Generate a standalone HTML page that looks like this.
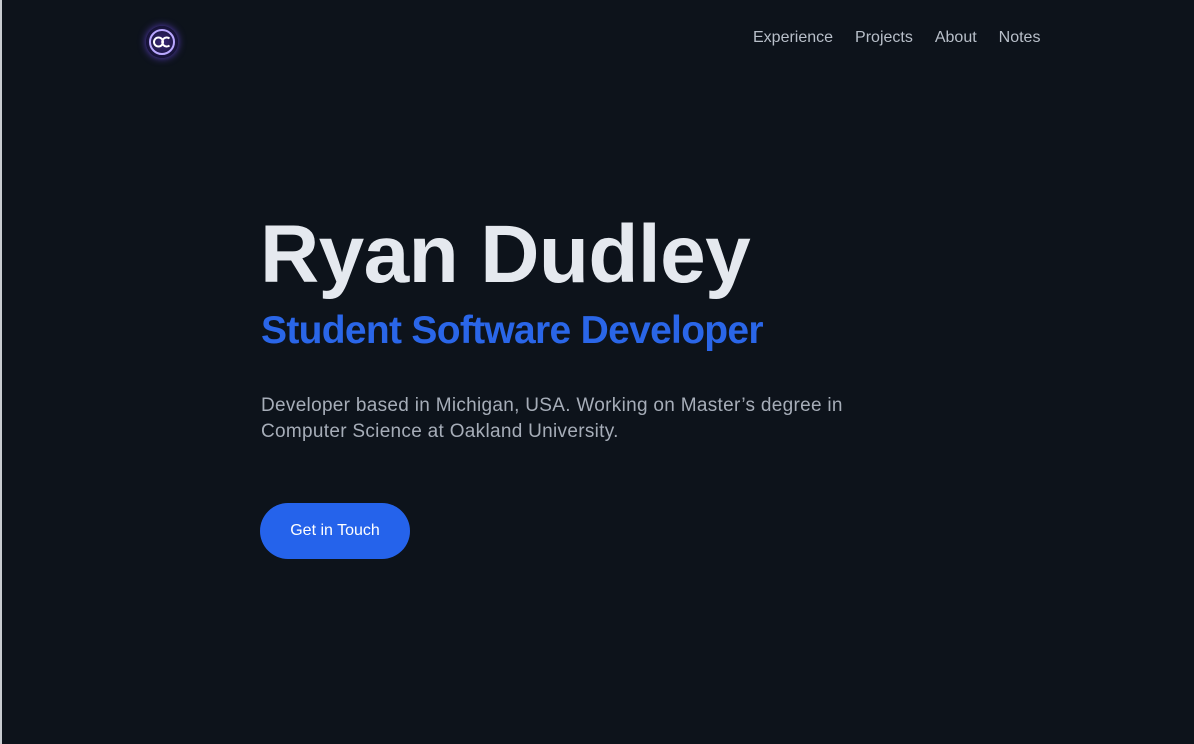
<!DOCTYPE html>
<html><head><style>
html,body{margin:0;padding:0;}
body{width:1194px;height:744px;background:#0d131b;position:relative;overflow:hidden;font-family:"Liberation Sans",sans-serif;border-left:2px solid #c8ccd0;box-sizing:border-box;}
.logo{position:absolute;left:144px;top:26px;width:32px;height:32px;border-radius:50%;background:radial-gradient(circle,#3b2a7a 0%,#1a1440 60%,#0d131b 100%);box-shadow:0 0 8px #5b3fc0;}
nav{position:absolute;top:29px;left:751px;font-size:16px;color:#b8bfc9;}
nav span{margin-right:22px;}
h1{position:absolute;left:258px;top:208px;margin:0;font-size:82px;font-weight:bold;color:#e5e9ef;letter-spacing:-0.6px;}
h2{position:absolute;left:259px;top:309px;margin:0;font-size:39px;font-weight:bold;color:#2a66e8;letter-spacing:-0.7px;}
p{position:absolute;left:259px;top:393px;margin:0;font-size:19px;letter-spacing:0.3px;line-height:26px;color:#a6adb8;width:600px;}
.btn{position:absolute;left:258px;top:503px;width:150px;height:56px;border-radius:28px;background:#2563eb;color:#fff;font-size:16px;line-height:56px;text-align:center;}
</style></head><body>
<div class="logo"><svg width="32" height="32" viewBox="0 0 32 32"><circle cx="16" cy="16" r="12" fill="none" stroke="#b9a8ff" stroke-width="2"/><circle cx="12.5" cy="16" r="4.5" fill="none" stroke="#fff" stroke-width="2"/><path d="M23.5 12.5a4.5 4.5 0 1 0 0 7" fill="none" stroke="#fff" stroke-width="2"/></svg></div>
<nav><span>Experience</span><span>Projects</span><span>About</span><span>Notes</span></nav>
<h1>Ryan Dudley</h1>
<h2>Student Software Developer</h2>
<p>Developer based in Michigan, USA. Working on Master’s degree in Computer Science at Oakland University.</p>
<div class="btn">Get in Touch</div>
</body></html>
